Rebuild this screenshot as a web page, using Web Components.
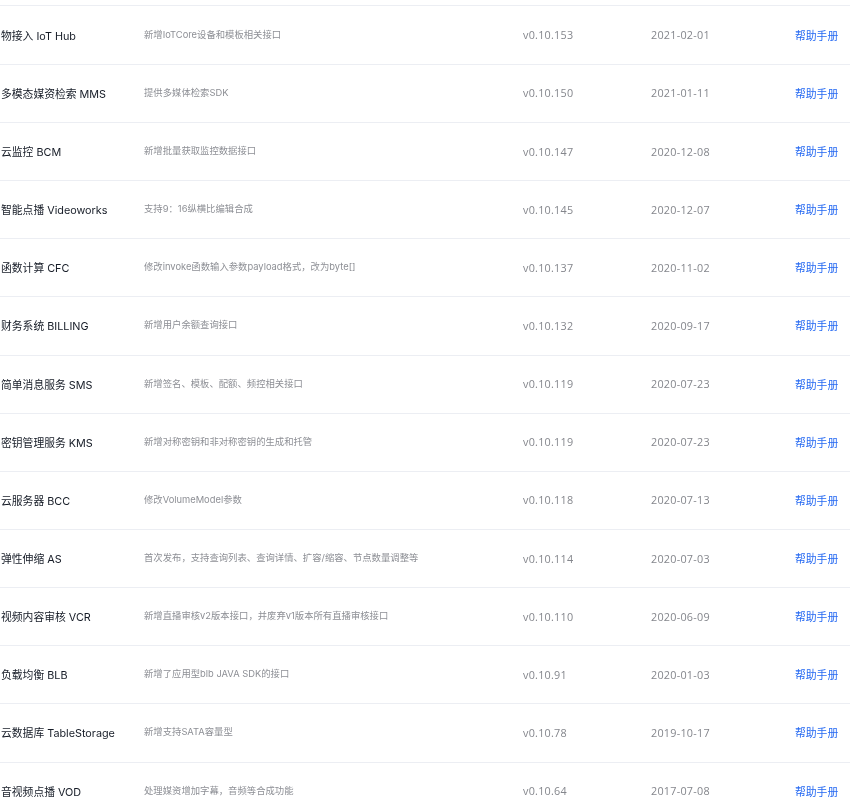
<!DOCTYPE html>
<html lang="zh">
<head>
<meta charset="utf-8">
<title>SDK</title>
<style>
  html, body { margin: 0; height: 805px; overflow: hidden; background: #fff; }
</style>
</head>
<body>
<sdk-table>
  <sdk-row name="物接入 IoT Hub" desc="新增IoTCore设备和模板相关接口" version="v0.10.153" date="2021-02-01"></sdk-row>
  <sdk-row name="多模态媒资检索 MMS" desc="提供多媒体检索SDK" version="v0.10.150" date="2021-01-11"></sdk-row>
  <sdk-row name="云监控 BCM" desc="新增批量获取监控数据接口" version="v0.10.147" date="2020-12-08"></sdk-row>
  <sdk-row name="智能点播 Videoworks" desc="支持9：16纵横比编辑合成" version="v0.10.145" date="2020-12-07"></sdk-row>
  <sdk-row name="函数计算 CFC" desc="修改invoke函数输入参数payload格式，改为byte[]" version="v0.10.137" date="2020-11-02"></sdk-row>
  <sdk-row name="财务系统 BILLING" desc="新增用户余额查询接口" version="v0.10.132" date="2020-09-17"></sdk-row>
  <sdk-row name="简单消息服务 SMS" desc="新增签名、模板、配额、频控相关接口" version="v0.10.119" date="2020-07-23"></sdk-row>
  <sdk-row name="密钥管理服务 KMS" desc="新增对称密钥和非对称密钥的生成和托管" version="v0.10.119" date="2020-07-23"></sdk-row>
  <sdk-row name="云服务器 BCC" desc="修改VolumeModel参数" version="v0.10.118" date="2020-07-13"></sdk-row>
  <sdk-row name="弹性伸缩 AS" desc="首次发布，支持查询列表、查询详情、扩容/缩容、节点数量调整等" version="v0.10.114" date="2020-07-03"></sdk-row>
  <sdk-row name="视频内容审核 VCR" desc="新增直播审核v2版本接口，并废弃v1版本所有直播审核接口" version="v0.10.110" date="2020-06-09"></sdk-row>
  <sdk-row name="负载均衡 BLB" desc="新增了应用型blb JAVA SDK的接口" version="v0.10.91" date="2020-01-03"></sdk-row>
  <sdk-row name="云数据库 TableStorage" desc="新增支持SATA容量型" version="v0.10.78" date="2019-10-17"></sdk-row>
  <sdk-row name="音视频点播 VOD" desc="处理媒资增加字幕，音频等合成功能" version="v0.10.64" date="2017-07-08"></sdk-row>
</sdk-table>
<script>
class SdkTable extends HTMLElement {
  constructor() {
    super();
    this.attachShadow({ mode: "open" });
    this.shadowRoot.innerHTML = `
    <style>
      :host {
        display: block;
        padding-top: 5px;
        font-family: Inter, "Noto Sans CJK SC", sans-serif;
        filter: blur(0.45px);
      }
      .rows {
        display: flex;
        flex-direction: column;
        padding-top: 0.7px;
        border-top: 1px solid #eceef3;
      }
    </style>
    <div class="rows"><slot></slot></div>`;
  }
}

class SdkRow extends HTMLElement {
  constructor() {
    super();
    this.attachShadow({ mode: "open" });
  }
  connectedCallback() {
    this.shadowRoot.innerHTML = `
    <style>
      :host {
        display: grid;
        grid-template-columns: 143px 379px 128px 144px 1fr;
        align-items: center;
        box-sizing: border-box;
        height: 58.15px;
        padding-left: 1px;
        border-bottom: 1px solid #eceef3;
        white-space: nowrap;
      }
      .name { font-size: 10.8px; color: #151b26; margin-top: -1px; }
      .desc { font-size: 9.35px; color: #8d8f95; margin-top: -3px; }
      .version, .date {
        font-family: "Open Sans", sans-serif;
        font-size: 10.8px;
        letter-spacing: 0.25px;
        color: #84868c;
        margin-top: -1px;
      }
      a { font-size: 10.8px; color: #2468f2; text-decoration: none; margin-top: -1px; }
    </style>
    <span class="name">${this.getAttribute("name")}</span>
    <span class="desc">${this.getAttribute("desc")}</span>
    <span class="version">${this.getAttribute("version")}</span>
    <span class="date">${this.getAttribute("date")}</span>
    <a href="#">帮助手册</a>`;
  }
}

customElements.define("sdk-table", SdkTable);
customElements.define("sdk-row", SdkRow);
</script>
</body>
</html>
